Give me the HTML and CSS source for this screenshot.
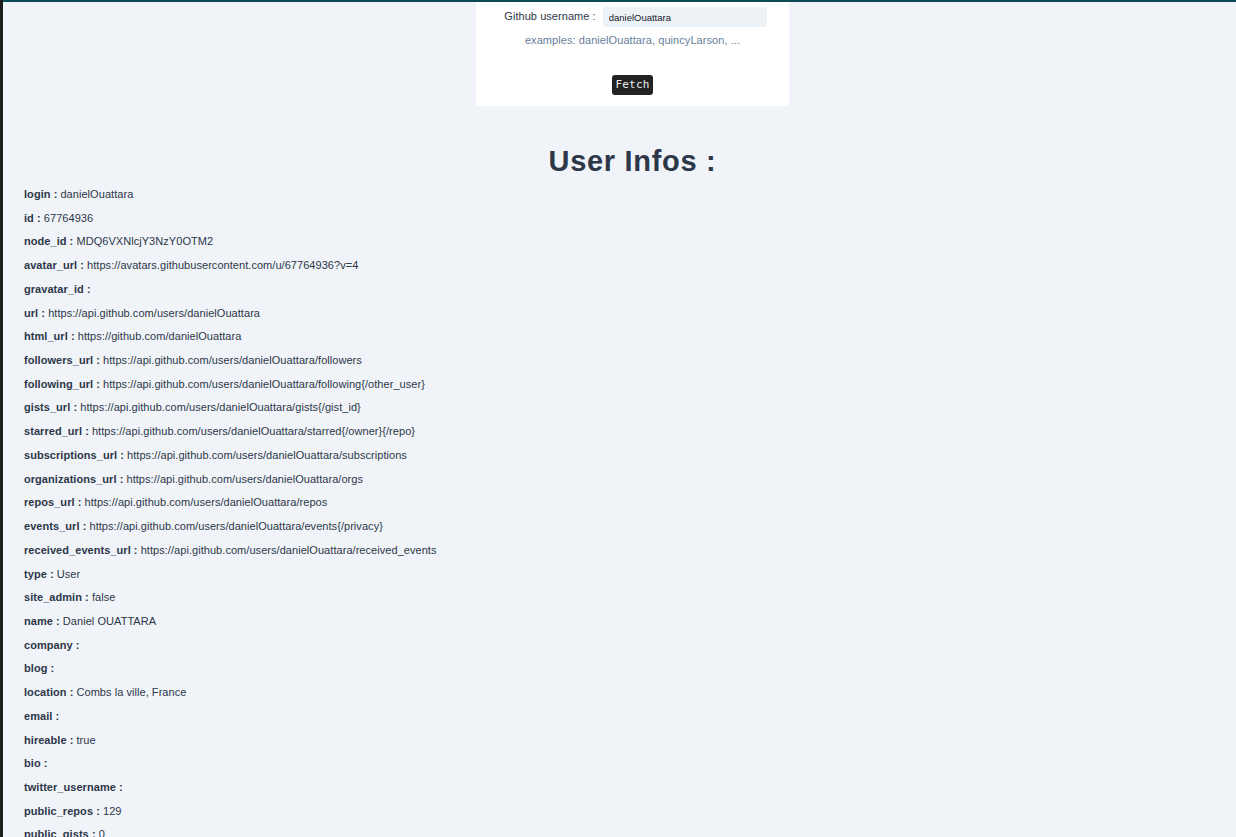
FILE: index.html
```html
<!DOCTYPE html>
<html lang="en">
<head>
<meta charset="utf-8">
<title>Github User Infos</title>
<link rel="stylesheet" href="styles.css">
</head>
<body>
<div class="sidebar"></div>
<main class="main">
  <section class="head-area">
    <form class="card">
      <div class="field">
        <label class="field-label" for="username">Github username :</label>
        <input class="field-input" id="username" type="text" value="danielOuattara">
      </div>
      <p class="examples">examples: danielOuattara, quincyLarson, ...</p>
      <div class="actions"><button class="fetch-btn" type="button">Fetch</button></div>
    </form>
    <h1 class="title">User Infos :</h1>
  </section>
  <section class="infos">
    <p class="row"><b>login :</b> danielOuattara</p>
    <p class="row"><b>id :</b> 67764936</p>
    <p class="row"><b>node_id :</b> MDQ6VXNlcjY3NzY0OTM2</p>
    <p class="row"><b>avatar_url :</b> https://avatars.githubusercontent.com/u/67764936?v=4</p>
    <p class="row"><b>gravatar_id :</b> </p>
    <p class="row"><b>url :</b> https://api.github.com/users/danielOuattara</p>
    <p class="row"><b>html_url :</b> https://github.com/danielOuattara</p>
    <p class="row"><b>followers_url :</b> https://api.github.com/users/danielOuattara/followers</p>
    <p class="row"><b>following_url :</b> https://api.github.com/users/danielOuattara/following{/other_user}</p>
    <p class="row"><b>gists_url :</b> https://api.github.com/users/danielOuattara/gists{/gist_id}</p>
    <p class="row"><b>starred_url :</b> https://api.github.com/users/danielOuattara/starred{/owner}{/repo}</p>
    <p class="row"><b>subscriptions_url :</b> https://api.github.com/users/danielOuattara/subscriptions</p>
    <p class="row"><b>organizations_url :</b> https://api.github.com/users/danielOuattara/orgs</p>
    <p class="row"><b>repos_url :</b> https://api.github.com/users/danielOuattara/repos</p>
    <p class="row"><b>events_url :</b> https://api.github.com/users/danielOuattara/events{/privacy}</p>
    <p class="row"><b>received_events_url :</b> https://api.github.com/users/danielOuattara/received_events</p>
    <p class="row"><b>type :</b> User</p>
    <p class="row"><b>site_admin :</b> false</p>
    <p class="row"><b>name :</b> Daniel OUATTARA</p>
    <p class="row"><b>company :</b> </p>
    <p class="row"><b>blog :</b> </p>
    <p class="row"><b>location :</b> Combs la ville, France</p>
    <p class="row"><b>email :</b> </p>
    <p class="row"><b>hireable :</b> true</p>
    <p class="row"><b>bio :</b> </p>
    <p class="row"><b>twitter_username :</b> </p>
    <p class="row"><b>public_repos :</b> 129</p>
    <p class="row"><b>public_gists :</b> 0</p>
    <p class="row"><b>followers :</b> 12</p>
    <p class="row"><b>following :</b> 20</p>
  </section>
</main>
</body>
</html>
```

FILE: styles.css
```css
html, body {
  margin: 0;
  padding: 0;
}

body {
  display: flex;
  min-height: 100vh;
  background: #f0f4f8;
  font-family: "Liberation Sans", Arial, sans-serif;
  color: #2d3748;
  overflow: hidden;
}

.sidebar {
  width: 3px;
  flex: 0 0 3px;
  background: #1e1e1e;
}

.main {
  flex: 1;
  border-top: 2px solid #0a4a59;
}

.head-area {
  padding-left: 26px;
}

.card {
  width: 313px;
  margin: 0 auto;
  background: #ffffff;
  border-radius: 0 0 4px 4px;
  padding: 5px 0 11px;
  box-sizing: border-box;
}

.field {
  display: flex;
  justify-content: center;
  align-items: center;
  gap: 7px;
  padding-left: 6px;
}

.field-label {
  font-size: 11px;
  color: #2d3748;
  line-height: 13px;
  margin-top: -2px;
  letter-spacing: 0.05px;
}

.field-input {
  width: 164px;
  height: 20px;
  box-sizing: border-box;
  border: none;
  border-radius: 2px;
  background: #edf2f7;
  font-family: "Liberation Sans", Arial, sans-serif;
  font-size: 9.5px;
  color: #1a202c;
  padding: 0 6px;
  outline: none;
}

.examples {
  margin: 7px 0 0;
  text-align: center;
  font-size: 11px;
  line-height: 13px;
  color: #667e99;
  letter-spacing: 0.07px;
}

.actions {
  display: flex;
  justify-content: center;
  margin-top: 28px;
}

.fetch-btn {
  height: 20px;
  padding: 0 3.5px;
  border: none;
  border-radius: 3px;
  background: #222222;
  color: #eeeeee;
  font-family: "DejaVu Sans Mono", "Liberation Mono", monospace;
  font-size: 11px;
  line-height: 20px;
  letter-spacing: 0.2px;
}

.title {
  margin: 38px 0 0;
  text-align: center;
  font-size: 29px;
  line-height: 35px;
  font-weight: 700;
  letter-spacing: 0.7px;
  color: #2d3748;
}

.infos {
  display: flex;
  flex-direction: column;
  gap: 10px;
  padding: 9px 0 0 21px;
}

.row {
  margin: 0;
  font-size: 11px;
  line-height: 13.72px;
  letter-spacing: 0.05px;
  color: #2d3748;
}

.row b {
  font-weight: 700;
}
```
